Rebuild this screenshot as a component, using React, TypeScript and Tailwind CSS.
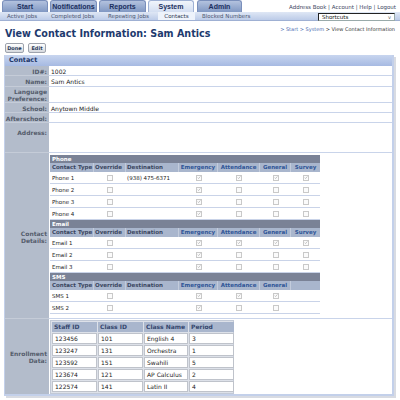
import React from "react";

type Row = { name: string; dest?: string; checks: boolean[] };

const Check = ({ on }: { on: boolean }) => (
  <div className="w-[6px] h-[6px] border border-[#c9c9c9] bg-[#fbfbfb] flex items-center justify-center">
    {on && (
      <svg width="5" height="5" viewBox="0 0 5 5">
        <path d="M0.8 2.6 L2 3.8 L4.3 1.1" stroke="#a8a8a8" strokeWidth="0.8" fill="none" />
      </svg>
    )}
  </div>
);

const Group = ({ title, rows, survey }: { title: string; rows: Row[]; survey: boolean }) => (
  <>
    <div className="h-[8px] bg-[#7a8296] text-white font-bold text-[5.5px] leading-[8px] pl-[2px]">{title}</div>
    <div className="grid grid-cols-[44px_32px_53px_39px_42px_31px_29px] h-[9px] bg-[#a9b6cd] text-[5.5px] leading-[9px] font-bold">
      <div className="pl-[2px] text-[#3a4660] border-r border-[#c3ccdc]">Contact Type</div>
      <div className="pl-[1px] text-[#3a4660] border-r border-[#c3ccdc]">Override</div>
      <div className="pl-[1px] text-[#3a4660] border-r border-[#c3ccdc]">Destination</div>
      <div className="text-center text-[#2f5597] border-r border-[#c3ccdc]">Emergency</div>
      <div className="text-center text-[#2f5597] border-r border-[#c3ccdc]">Attendance</div>
      <div className="text-center text-[#2f5597] border-r border-[#c3ccdc]">General</div>
      <div className="text-center text-[#2f5597]">{survey ? "Survey" : ""}</div>
    </div>
    {rows.map((r) => (
      <div
        key={r.name}
        className="grid grid-cols-[44px_32px_53px_39px_42px_31px_29px] h-[12px] bg-white border-b border-[#c9d3e8] text-[5.5px] text-[#222] items-center"
      >
        <div className="pl-[2px]">{r.name}</div>
        <div className="flex justify-center"><Check on={false} /></div>
        <div className="pl-[1px]">{r.dest ?? ""}</div>
        {r.checks.map((c, i) => (
          <div key={i} className="flex justify-center">
            {(survey || i < 3) && <Check on={c} />}
          </div>
        ))}
      </div>
    ))}
  </>
);

const LabelRow = ({
  label,
  h,
  children,
  labelClass = "",
}: {
  label: React.ReactNode;
  h: string;
  children?: React.ReactNode;
  labelClass?: string;
}) => (
  <div className={`flex ${h}`}>
    <div
      className={`w-[44px] shrink-0 bg-[#b3bccb] border-b border-[#c5ccd8] text-right pr-[2px] font-bold text-[6px] leading-[7px] text-[#555c6c] ${labelClass}`}
    >
      {label}
    </div>
    <div className="flex-1 border-b border-[#c9d4ea] pl-[2px] text-[6px] text-[#222]">{children}</div>
  </div>
);

export default function App() {
  const tabs = [
    { t: "Start", w: "w-[46px]", ml: "ml-[2px]" },
    { t: "Notifications", w: "w-[47px]", ml: "ml-[2px]" },
    { t: "Reports", w: "w-[47px]", ml: "ml-[2px]" },
    { t: "System", w: "w-[46px]", ml: "ml-[2px]", active: true },
    { t: "Admin", w: "w-[45px]", ml: "ml-[3px]" },
  ];
  const phones: Row[] = [
    { name: "Phone 1", dest: "(938) 475-6371", checks: [true, true, true, true] },
    { name: "Phone 2", checks: [true, false, false, false] },
    { name: "Phone 3", checks: [true, false, false, false] },
    { name: "Phone 4", checks: [true, false, false, false] },
  ];
  const emails: Row[] = [
    { name: "Email 1", checks: [true, true, true, true] },
    { name: "Email 2", checks: [true, false, false, false] },
    { name: "Email 3", checks: [true, false, false, false] },
  ];
  const sms: Row[] = [
    { name: "SMS 1", checks: [true, true, true, false] },
    { name: "SMS 2", checks: [true, false, false, false] },
  ];
  const enroll = [
    ["123456", "101", "English 4", "3"],
    ["123247", "131", "Orchestra", "1"],
    ["123592", "151", "Swahili", "5"],
    ["123674", "121", "AP Calculus", "2"],
    ["122574", "141", "Latin II", "4"],
  ];

  return (
    <div className="w-[400px] h-[400px] overflow-hidden bg-white font-['DejaVu_Sans',sans-serif] text-[#222]">
      {/* Tabs */}
      <div className="flex h-[12px]">
        {tabs.map((t) => (
          <div
            key={t.t}
            className={`${t.w} ${t.ml} h-[12px] rounded-t-[3px] border border-b-0 text-center font-bold font-['Liberation_Sans',Arial,sans-serif] text-[7px] leading-[12px] ${
              t.active
                ? "bg-gradient-to-b from-[#f1f5fb] to-[#d3def1] border-[#9fb1d4] text-[#1b2f5e]"
                : "bg-gradient-to-b from-[#b3c2de] to-[#8198c3] border-[#7a8fbb] text-[#1b2f5e]"
            }`}
          >
            {t.t}
          </div>
        ))}
        <div className="ml-auto pr-[4px] pt-[4px] text-[5.5px] leading-[7px] text-[#3b4560] whitespace-nowrap">
          Address Book | Account | Help | Logout
        </div>
      </div>
      {/* Sub nav */}
      <div className="flex h-[9px] bg-gradient-to-b from-[#dfe7f5] to-[#bccbe8] border-b border-[#9fb0d3] text-[5.5px] leading-[9px] text-[#4b5670]">
        <div className="w-[44px] pl-[7px]">Active Jobs</div>
        <div className="w-[57px] pl-[7px]">Completed Jobs</div>
        <div className="w-[57px] pl-[7px]">Repeating Jobs</div>
        <div className="w-[37px] bg-[#eef3fb] text-center text-[#2b3550]">Contacts</div>
        <div className="pl-[7px]">Blocked Numbers</div>
        <div className="ml-auto mr-[5px] mt-[1px] w-[77px] h-[8px] bg-white border border-[#222] border-r-[#9aa] border-b-[#9aa] flex items-center px-[3px] text-[5.5px] leading-[6px] text-[#111]">
          <span>Shortcuts</span>
          <span className="ml-auto text-[#666] text-[5px]">v</span>
        </div>
      </div>
      {/* Title + breadcrumb */}
      <div className="flex h-[19px]">
        <div className="pl-[5px] pt-[7px] text-[9.6px] leading-[12px] font-bold text-[#1d3a6e] whitespace-nowrap">
          View Contact Information: Sam Antics
        </div>
        <div className="ml-auto pr-[5px] pt-[4px] text-[5px] leading-[8px] whitespace-nowrap">
          <span className="text-[#4a6ab0]">&gt; Start &gt; System</span>
          <span className="text-[#333]"> &gt; View Contact Information</span>
        </div>
      </div>
      {/* Buttons */}
      <div className="flex mt-[3px] pl-[5px] gap-[4px]">
        <div className="w-[19px] h-[10px] rounded-[2px] border border-[#9ea3ad] bg-gradient-to-b from-white to-[#d6d9de] text-center font-bold text-[5px] leading-[8px] text-[#2a3a5a]">
          Done
        </div>
        <div className="w-[18px] h-[10px] rounded-[2px] border border-[#9ea3ad] bg-gradient-to-b from-white to-[#d6d9de] text-center font-bold text-[5px] leading-[8px] text-[#2a3a5a]">
          Edit
        </div>
      </div>
      {/* Panel */}
      <div className="mt-[2px] ml-[4px] w-[390px] h-[341px] border-l border-[#c3d0ea] border-r-[2px] border-b-[2px] border-[#a9bbe2] shadow-[2px_2px_0_#d8dbe2] flex flex-col">
        <div className="h-[11px] bg-gradient-to-b from-[#c8d5ef] to-[#a6bae2] pl-[4px] font-bold text-[6.5px] leading-[11px] text-[#1d3668]">
          Contact
        </div>
        <LabelRow label="ID#:" h="h-[10px]" labelClass="pt-[2px]">
          <div className="pt-[2px] leading-[7px]">1002</div>
        </LabelRow>
        <LabelRow label="Name:" h="h-[11px]" labelClass="pt-[2px]">
          <div className="pt-[2px] leading-[7px]">Sam Antics</div>
        </LabelRow>
        <LabelRow
          label={
            <>
              Language
              <br />
              Preference:
            </>
          }
          h="h-[16px]"
          labelClass="pt-[1px]"
        />
        <LabelRow label="School:" h="h-[10px]" labelClass="pt-[2px]">
          <div className="pt-[2px] leading-[7px]">Anytown Middle</div>
        </LabelRow>
        <LabelRow label="Afterschool:" h="h-[10px]" labelClass="pt-[2px]" />
        <LabelRow label="Address:" h="h-[31px]" labelClass="pt-[6px]" />
        {/* Contact details */}
        <div className="flex h-[168px]">
          <div className="w-[44px] shrink-0 bg-[#b3bccb] border-b border-[#c5ccd8] text-right pr-[2px] font-bold text-[6px] leading-[7px] text-[#555c6c] flex flex-col justify-center">
            <div className="pt-[2px]">
              Contact
              <br />
              Details:
            </div>
          </div>
          <div className="flex-1 border-b border-[#c9d4ea] pl-[1px] pt-[2px]">
            <div className="w-[270px]">
              <Group title="Phone" rows={phones} survey />
              <Group title="Email" rows={emails} survey />
              <Group title="SMS" rows={sms} survey={false} />
            </div>
          </div>
        </div>
        {/* Enrollment */}
        <div className="flex flex-1">
          <div className="w-[44px] shrink-0 bg-[#b3bccb] text-right pr-[2px] font-bold text-[6px] leading-[7px] text-[#555c6c] flex flex-col justify-center">
            <div>
              Enrollment
              <br />
              Data:
            </div>
          </div>
          <div className="flex-1 pl-[1px] pt-[1px]">
            <div className="w-[184px] bg-[#dde1e9] p-[1px] border border-[#c2c9d6]">
              <div className="grid grid-cols-[45px_45px_44px_45px] gap-[1px]">
                {["Staff ID", "Class ID", "Class Name", "Period"].map((h) => (
                  <div key={h} className="h-[10px] bg-[#a9b6cd] pl-[2px] font-bold text-[6px] leading-[10px] text-[#34466e]">
                    {h}
                  </div>
                ))}
                {enroll.flatMap((r, i) =>
                  r.map((c, j) => (
                    <div
                      key={`${i}-${j}`}
                      className="h-[11px] bg-white border border-[#bfc3cb] pl-[2px] text-[6px] leading-[9px] text-[#222]"
                    >
                      {c}
                    </div>
                  ))
                )}
              </div>
            </div>
          </div>
        </div>
      </div>
    </div>
  );
}
